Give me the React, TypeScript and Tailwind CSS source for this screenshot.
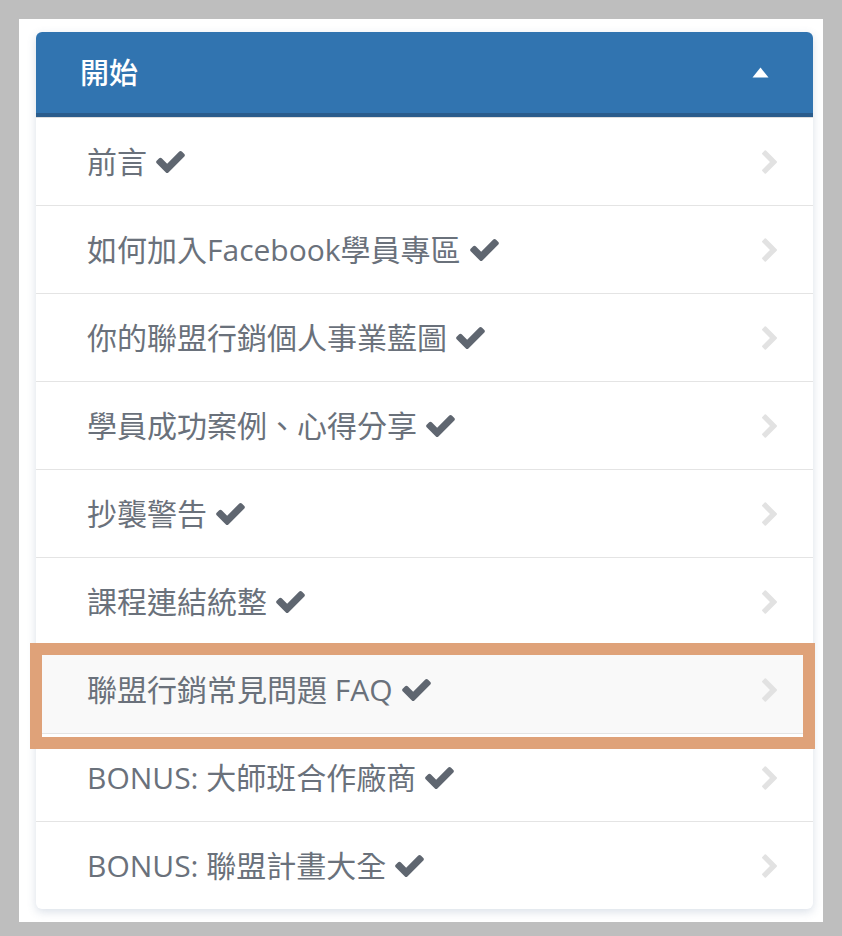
import React from 'react';

const lessons: { title: string; active?: boolean }[] = [
  { title: '前言' },
  { title: '如何加入Facebook學員專區' },
  { title: '你的聯盟行銷個人事業藍圖' },
  { title: '學員成功案例、心得分享' },
  { title: '抄襲警告' },
  { title: '課程連結統整' },
  { title: '聯盟行銷常見問題 FAQ', active: true },
  { title: 'BONUS: 大師班合作廠商' },
  { title: 'BONUS: 聯盟計畫大全' },
];

const CheckIcon = () => (
  <svg width="29" height="22" viewBox="121 334 1550 1188" className="shrink-0 fill-[#5f6670]">
    <path d="M1671 566q0 40-28 68l-724 724-136 136q-28 28-68 28t-68-28l-136-136-362-362q-28-28-28-68t28-68l136-136q28-28 68-28t68 28l294 295 656-657q28-28 68-28t68 28l136 136q28 28 28 68z" />
  </svg>
);

const ChevronIcon = () => (
  <svg width="15" height="24" viewBox="346 26 1036 1612" className="shrink-0 fill-[#e2e2e2]">
    <path d="M1363 877l-742 742q-19 19-45 19t-45-19l-166-166q-19-19-19-45t19-45l531-531-531-531q-19-19-19-45t19-45l166-166q19-19 45-19t45 19l742 742q19 19 19 45t-19 45z" />
  </svg>
);

export default function App() {
  return (
    <div className="min-h-[936px] bg-[#bebebe] px-[19px] pt-[19px] pb-[16px] font-['Open_Sans','Noto_Sans_CJK_TC',sans-serif]">
      <div className="bg-white pl-[17px] pr-[10px] pt-[13px] pb-[13px]">
        {/* Section card */}
        <div className="rounded-[6px] bg-white shadow-[0_3px_10px_rgba(70,100,140,0.2)]">
          <div className="flex h-[85px] items-center justify-between rounded-t-[6px] border-b-4 border-[#2a5c8c] bg-[#3174b0] pl-[44px] pr-[44px]">
            <h2 className="text-[29px] font-medium leading-none text-white">開始</h2>
            <svg width="17" height="11" viewBox="0 0 17 11" className="fill-white">
              <path d="M8.5 0.5L16.5 10.5H0.5Z" strokeLinejoin="round" />
            </svg>
          </div>

          <div className="border-t border-[#dedede]">
            {lessons.map((item, idx) => (
              <div
                key={idx}
                className={`relative flex items-center justify-between pl-[51px] pr-[36px] py-[22px] ${
                  idx < lessons.length - 1 ? 'border-b border-[#e4e4e4]' : ''
                } ${item.active ? 'bg-[#f9f9f9]' : ''} ${idx === lessons.length - 1 ? 'rounded-b-[6px]' : ''}`}
              >
                <div className="flex items-center gap-[9px]">
                  <span className="text-[30px] leading-[43px] text-[#6a717b]">{item.title}</span>
                  <CheckIcon />
                </div>
                <ChevronIcon />
                {item.active && (
                  <div className="pointer-events-none absolute -top-[3px] -left-[6px] -right-[2px] -bottom-[16px] border-[12px] border-[#dfa279]" />
                )}
              </div>
            ))}
          </div>
        </div>
      </div>
    </div>
  );
}
